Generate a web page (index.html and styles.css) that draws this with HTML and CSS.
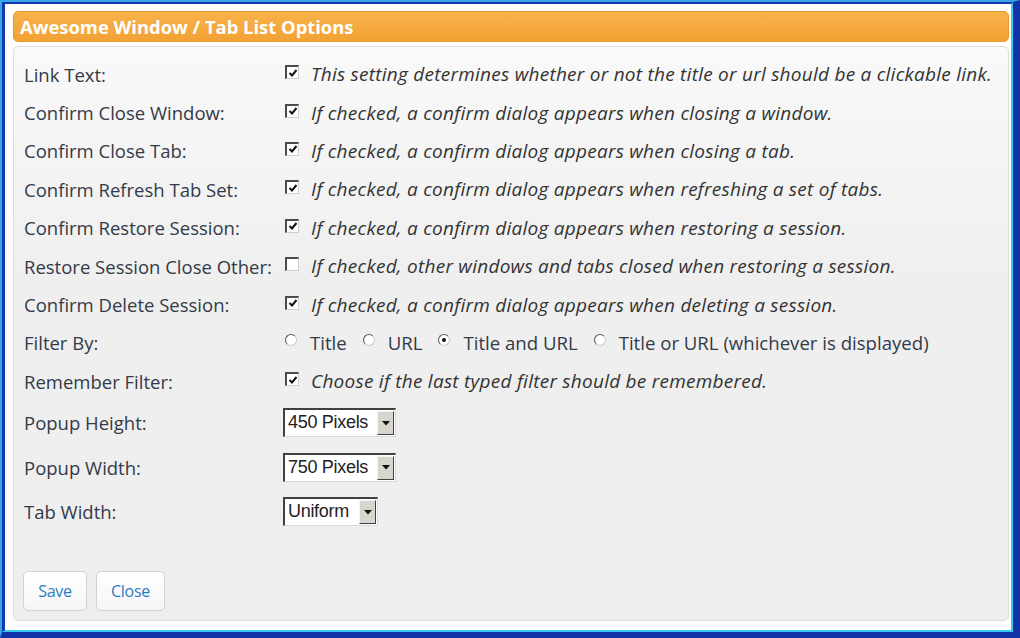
FILE: index.html
```html
<!DOCTYPE html>
<html>
<head>
<meta charset="utf-8">
<link rel="stylesheet" href="styles.css">
</head>
<body>
<div class="frame">
  <div class="frame-inner">
    <div class="header">Awesome Window / Tab List Options</div>
    <div class="panel">
      <div class="rows">
        <div class="row">
          <div class="label">Link Text:</div>
          <div class="field"><span class="cb checked"><svg viewBox="0 0 10 10"><path d="M1.5 5 L4 7.5 L8.5 2" /></svg></span><span class="desc">This setting determines whether or not the title or url should be a clickable link.</span></div>
        </div>
        <div class="row">
          <div class="label">Confirm Close Window:</div>
          <div class="field"><span class="cb checked"><svg viewBox="0 0 10 10"><path d="M1.5 5 L4 7.5 L8.5 2" /></svg></span><span class="desc">If checked, a confirm dialog appears when closing a window.</span></div>
        </div>
        <div class="row">
          <div class="label">Confirm Close Tab:</div>
          <div class="field"><span class="cb checked"><svg viewBox="0 0 10 10"><path d="M1.5 5 L4 7.5 L8.5 2" /></svg></span><span class="desc">If checked, a confirm dialog appears when closing a tab.</span></div>
        </div>
        <div class="row">
          <div class="label">Confirm Refresh Tab Set:</div>
          <div class="field"><span class="cb checked"><svg viewBox="0 0 10 10"><path d="M1.5 5 L4 7.5 L8.5 2" /></svg></span><span class="desc">If checked, a confirm dialog appears when refreshing a set of tabs.</span></div>
        </div>
        <div class="row">
          <div class="label">Confirm Restore Session:</div>
          <div class="field"><span class="cb checked"><svg viewBox="0 0 10 10"><path d="M1.5 5 L4 7.5 L8.5 2" /></svg></span><span class="desc">If checked, a confirm dialog appears when restoring a session.</span></div>
        </div>
        <div class="row">
          <div class="label">Restore Session Close Other:</div>
          <div class="field"><span class="cb"></span><span class="desc">If checked, other windows and tabs closed when restoring a session.</span></div>
        </div>
        <div class="row">
          <div class="label">Confirm Delete Session:</div>
          <div class="field"><span class="cb checked"><svg viewBox="0 0 10 10"><path d="M1.5 5 L4 7.5 L8.5 2" /></svg></span><span class="desc">If checked, a confirm dialog appears when deleting a session.</span></div>
        </div>
        <div class="row">
          <div class="label">Filter By:</div>
          <div class="field radios">
            <span class="opt"><span class="rd"></span><span class="rtext">Title</span></span>
            <span class="opt"><span class="rd"></span><span class="rtext">URL</span></span>
            <span class="opt"><span class="rd on"></span><span class="rtext">Title and URL</span></span>
            <span class="opt"><span class="rd"></span><span class="rtext">Title or URL (whichever is displayed)</span></span>
          </div>
        </div>
        <div class="row">
          <div class="label">Remember Filter:</div>
          <div class="field"><span class="cb checked"><svg viewBox="0 0 10 10"><path d="M1.5 5 L4 7.5 L8.5 2" /></svg></span><span class="desc">Choose if the last typed filter should be remembered.</span></div>
        </div>
        <div class="row tall">
          <div class="label">Popup Height:</div>
          <div class="field"><span class="sel w113"><span class="val">450 Pixels</span><span class="arrow"><svg viewBox="0 0 8 5"><path d="M0 0 H8 L4 4.5 Z" /></svg></span></span></div>
        </div>
        <div class="row tall">
          <div class="label">Popup Width:</div>
          <div class="field"><span class="sel w113"><span class="val">750 Pixels</span><span class="arrow"><svg viewBox="0 0 8 5"><path d="M0 0 H8 L4 4.5 Z" /></svg></span></span></div>
        </div>
        <div class="row tall">
          <div class="label">Tab Width:</div>
          <div class="field"><span class="sel w95"><span class="val">Uniform</span><span class="arrow"><svg viewBox="0 0 8 5"><path d="M0 0 H8 L4 4.5 Z" /></svg></span></span></div>
        </div>
      </div>
      <div class="buttons">
        <button class="btn save">Save</button>
        <button class="btn close">Close</button>
      </div>
    </div>
  </div>
</div>
</body>
</html>
```

FILE: styles.css
```css
* { box-sizing: border-box; }
html, body { margin: 0; padding: 0; }
body {
  width: 1020px;
  height: 638px;
  overflow: hidden;
  font-family: "Open Sans", "DejaVu Sans", sans-serif;
  background: #ffffff;
}
.frame {
  width: 1020px;
  height: 638px;
  border-style: solid;
  border-width: 2px 7px 6px 2px;
  border-color: #3aa6e6 #1233a8 #1233a8 #3aa6e6;
}
.frame-inner {
  height: 100%;
  border-style: solid;
  border-width: 2px 2px 2px 3px;
  border-color: #1238b0 #38c8f0 #38c8f0 #1238b0;
  background: #ffffff;
  padding: 7px 2px 9px 8px;
  display: flex;
  flex-direction: column;
}
.header {
  height: 31px;
  border-radius: 5px;
  background: linear-gradient(#f7b24a, #f3a234);
  border: 1px solid #e9972a;
  color: #ffffff;
  font-weight: 700;
  font-size: 18.4px;
  line-height: 30px;
  padding-left: 6px;
}
.panel {
  flex: 1;
  margin-top: 4px;
  border: 1px solid #dcdcdc;
  border-radius: 5px;
  background: linear-gradient(#f9f9f9, #efefef 40%, #eeeeee);
  padding: 8px 10px 9px 10px;
  display: flex;
  flex-direction: column;
}
.rows { display: flex; flex-direction: column; }
.row {
  display: grid;
  grid-template-columns: 261px 1fr;
  align-items: center;
  height: 38.4px;
}
.row.tall { height: 44.5px; }
.label {
  font-size: 18.5px;
  color: #333a48;
  white-space: nowrap;
}
.field {
  display: flex;
  align-items: center;
  white-space: nowrap;
}
.cb {
  width: 14px;
  height: 14px;
  flex: none;
  background: #ffffff;
  border-style: solid;
  border-width: 2px 1px 1px 2px;
  border-color: #4a4a4a #cfcfcf #cfcfcf #4a4a4a;
  display: flex;
  align-items: center;
  justify-content: center;
  margin-right: 12px;
  margin-top: -4px;
}
.cb svg { width: 10px; height: 10px; }
.cb svg path { fill: none; stroke: #111111; stroke-width: 2; }
.desc {
  font-style: italic;
  font-size: 19px;
  color: #333333;
  letter-spacing: 0.25px;
}
.opt { display: inline-flex; align-items: center; margin-right: 16px; }
.rd {
  width: 12px;
  height: 12px;
  border-radius: 50%;
  background: #ffffff;
  border-style: solid;
  border-width: 1.5px;
  border-color: #555555 #cccccc #cccccc #555555;
  margin-right: 13px;
  margin-top: -6px;
  display: flex;
  align-items: center;
  justify-content: center;
}
.rd.on::after {
  content: "";
  width: 4px;
  height: 4px;
  border-radius: 50%;
  background: #111111;
}
.rtext {
  font-size: 18.6px;
  color: #333a48;
}
.sel {
  height: 29px;
  display: inline-flex;
  align-items: stretch;
  background: #ffffff;
  border-style: solid;
  border-width: 2px 1px 1px 2px;
  border-color: #404040 #d8d8d8 #d8d8d8 #404040;
  margin-left: -2px;
}
.sel.w113 { width: 113px; }
.sel.w95 { width: 95px; }
.val {
  flex: 1;
  font-family: "Liberation Sans", Arial, sans-serif;
  font-size: 18px;
  color: #222222;
  line-height: 25px;
  padding-left: 3px;
  letter-spacing: -0.3px;
  overflow: hidden;
}
.arrow {
  width: 17px;
  flex: none;
  margin: 1px 1px 1px 0;
  background: #d8d5cf;
  border-style: solid;
  border-width: 1px;
  border-color: #f4f4f4 #404040 #404040 #f4f4f4;
  display: flex;
  align-items: center;
  justify-content: center;
}
.arrow svg { width: 8px; height: 5px; }
.arrow svg path { fill: #111111; }
.buttons {
  margin-top: auto;
  display: flex;
  gap: 10px;
}
.btn {
  height: 40px;
  border: 1px solid #d2d2d2;
  border-radius: 5px;
  background: linear-gradient(#ffffff, #f5f5f5);
  color: #2b7bbf;
  font-family: "Open Sans", sans-serif;
  font-size: 16px;
  letter-spacing: -0.3px;
  padding: 0;
  margin-left: -1px;
}
.btn.save { width: 64px; }
.btn.close { width: 69px; }
```
